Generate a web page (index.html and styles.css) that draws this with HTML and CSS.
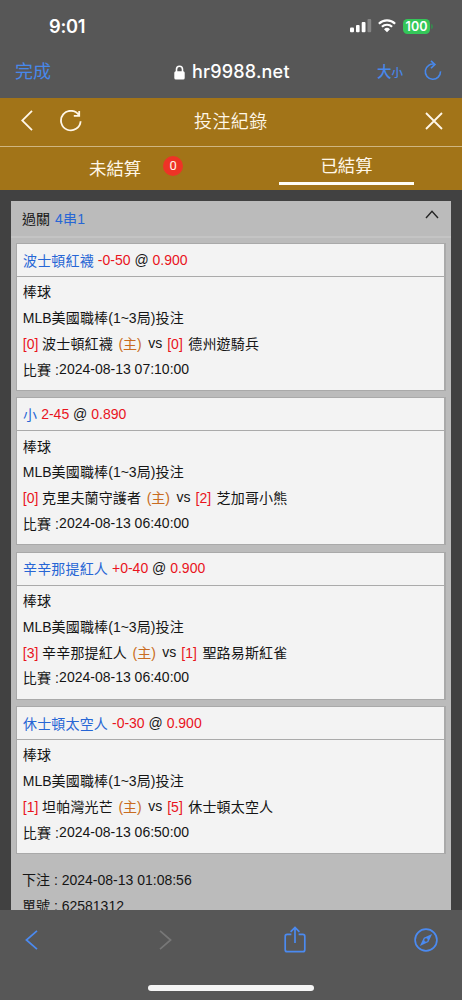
FILE: index.html
```html
<!DOCTYPE html>
<html lang="zh-Hant">
<head>
<meta charset="utf-8">
<title>投注紀錄</title>
<link rel="stylesheet" href="styles.css">
</head>
<body>
<div class="screen">
  <div class="status">
    <span class="clock">9:01</span>
    <svg class="signal" width="22" height="14" viewBox="0 0 22 14"><rect x="0" y="8.5" width="4" height="4.7" rx="1"/><rect x="6" y="6" width="3.6" height="7.2" rx="1"/><rect x="11.7" y="3" width="3.8" height="10.2" rx="1"/><rect x="17.5" y="0" width="3.7" height="13.2" rx="1" class="dim"/></svg>
    <svg class="wifi" width="18" height="14" viewBox="0 0 18 14"><path d="M.9 4.7a11.6 11.6 0 0 1 16.2 0M3.9 7.8a7.4 7.4 0 0 1 10.2 0" /><path class="dot" d="M9 13.3 6 10.2a4.4 4.4 0 0 1 6 0z"/></svg>
    <span class="battery">100</span><span class="battery-tip"></span>
  </div>
  <div class="address">
    <span class="done">完成</span>
    <svg class="lock" width="11" height="15" viewBox="0 0 11 15"><path d="M2.5 7V4.2a3 3 0 0 1 6 0V7" fill="none" stroke="#fff" stroke-width="1.6"/><rect x=".3" y="6.2" width="10.4" height="8.3" rx="1.6" fill="#fff"/></svg>
    <span class="host">hr9988.net</span>
    <span class="size">大<small>小</small></span>
    <svg class="reload" width="18" height="21" viewBox="0 0 18 21"><path d="M10.8 4.3A7.6 7.6 0 1 0 16.5 11.4M7 .9l3.9 3.5L7 8.2"/></svg>
  </div>
  <header class="header">
    <svg class="back" width="12" height="21" viewBox="0 0 12 21"><path d="M11 .8 1.2 10.5 11 20.2"/></svg>
    <svg class="refresh" width="23" height="22" viewBox="0 0 23 22"><path d="M19 5.2A9.8 9.8 0 1 0 20.6 11.2M19.2.9V5.9H13.8"/></svg>
    <h1>投注紀錄</h1>
    <svg class="close" width="18" height="18" viewBox="0 0 18 18"><path d="m1 1 16 16M17 1 1 17"/></svg>
  </header>
  <nav class="tabs">
    <div class="tab pending"><span>未結算</span><b>0</b></div>
    <div class="tab settled"><span>已結算</span></div>
  </nav>
  <main class="content">
    <section class="card">
      <div class="card-head"><span>過關</span><span class="blue combo">4串1</span><svg width="14" height="9" viewBox="0 0 14 9"><path d="m1 8 6-6.6L13 8"/></svg></div>
      <div class="bets">
        <article class="bet">
          <div class="pick"><span class="cj blue">波士頓紅襪</span><span><i>-0-50</i> @ <i>0.900</i></span></div>
          <div class="detail">
            <div class="row cj">棒球</div>
            <div class="row league">MLB<span class="cj">美國職棒</span>(1~3<span class="cj">局</span>)<span class="cj">投注</span></div>
            <div class="row match"><i>[0]</i><span class="cj home">波士頓紅襪</span><span class="host-mark">(主)</span><span class="vs">vs</span><i>[0]</i><span class="cj away">德州遊騎兵</span></div>
            <div class="row time"><span class="label"><span class="cj">比賽</span> :</span><span>2024-08-13 07:10:00</span></div>
          </div>
        </article>
        <article class="bet">
          <div class="pick"><span class="cj blue">小</span><span><i>2-45</i> @ <i>0.890</i></span></div>
          <div class="detail">
            <div class="row cj">棒球</div>
            <div class="row league">MLB<span class="cj">美國職棒</span>(1~3<span class="cj">局</span>)<span class="cj">投注</span></div>
            <div class="row match"><i>[0]</i><span class="cj home">克里夫蘭守護者</span><span class="host-mark">(主)</span><span class="vs">vs</span><i>[2]</i><span class="cj away">芝加哥小熊</span></div>
            <div class="row time"><span class="label"><span class="cj">比賽</span> :</span><span>2024-08-13 06:40:00</span></div>
          </div>
        </article>
        <article class="bet">
          <div class="pick"><span class="cj blue">辛辛那提紅人</span><span><i>+0-40</i> @ <i>0.900</i></span></div>
          <div class="detail">
            <div class="row cj">棒球</div>
            <div class="row league">MLB<span class="cj">美國職棒</span>(1~3<span class="cj">局</span>)<span class="cj">投注</span></div>
            <div class="row match"><i>[3]</i><span class="cj home">辛辛那提紅人</span><span class="host-mark">(主)</span><span class="vs">vs</span><i>[1]</i><span class="cj away">聖路易斯紅雀</span></div>
            <div class="row time"><span class="label"><span class="cj">比賽</span> :</span><span>2024-08-13 06:40:00</span></div>
          </div>
        </article>
        <article class="bet">
          <div class="pick"><span class="cj blue">休士頓太空人</span><span><i>-0-30</i> @ <i>0.900</i></span></div>
          <div class="detail">
            <div class="row cj">棒球</div>
            <div class="row league">MLB<span class="cj">美國職棒</span>(1~3<span class="cj">局</span>)<span class="cj">投注</span></div>
            <div class="row match"><i>[1]</i><span class="cj home">坦帕灣光芒</span><span class="host-mark">(主)</span><span class="vs">vs</span><i>[5]</i><span class="cj away">休士頓太空人</span></div>
            <div class="row time"><span class="label"><span class="cj">比賽</span> :</span><span>2024-08-13 06:50:00</span></div>
          </div>
        </article>
      </div>
      <div class="summary">
        <div>下注 : 2024-08-13 01:08:56</div>
        <div>單號 : 62581312</div>
      </div>
    </section>
  </main>
  <footer class="toolbar">
    <div class="tools">
      <svg class="prev" width="13" height="20" viewBox="0 0 13 20"><path d="M12 .8 1.4 10 12 19.2"/></svg>
      <svg class="next" width="13" height="20" viewBox="0 0 13 20"><path d="M1 .8 11.6 10 1 19.2"/></svg>
      <svg class="share" width="22" height="27" viewBox="0 0 22 27"><path d="M7.4 8.4H3.2a2 2 0 0 0-2 2v13.3a2 2 0 0 0 2 2h15.6a2 2 0 0 0 2-2V10.4a2 2 0 0 0-2-2h-4.2M11 17V1.6M6.6 5.8 11 1.4l4.4 4.4"/></svg>
      <svg class="compass" width="24" height="24" viewBox="0 0 24 24"><circle cx="12" cy="12" r="10.9"/><path fill-rule="evenodd" d="M18.1 5.9 14.4 14 5.9 18.1 9.8 9.8zM12 10.3a1.7 1.7 0 1 0 0 3.4 1.7 1.7 0 0 0 0-3.4z"/></svg>
    </div>
    <div class="home-bar"></div>
  </footer>
</div>
</body>
</html>
```
FILE: styles.css
```css
* { box-sizing: border-box; }
body { margin: 0; background: #414141; font-family: "Liberation Sans", "Noto Sans CJK TC", sans-serif; }
svg { display: block; flex: none; fill: none; }
i { font-style: normal; color: #e9141d; }
.screen { width: 462px; height: 1000px; display: flex; flex-direction: column; overflow: hidden; }
.status, .address { background: #575757; color: #fff; display: flex; align-items: center; flex: none; font-family: Inter, "Noto Sans CJK TC", sans-serif; }
.status { height: 51px; padding: 1px 0 0 49px; }
.clock { width: 301px; font-size: 18.3px; font-weight: 600; letter-spacing: -.3px; }
.signal { fill: #fff; width: 22px; }
.dim { opacity: .28; }
.wifi { margin-left: 6px; stroke: #fff; stroke-width: 2.2; }
.wifi .dot { fill: #fff; stroke: none; }
.battery { margin-left: 7px; width: 27px; height: 15px; border-radius: 4.5px; background: #34c759; font-size: 12.5px; line-height: 15px; font-weight: 600; text-align: center; }
.battery-tip { width: 1.5px; height: 5px; margin-left: 1px; background: #39864e; border-radius: 0 2px 2px 0; }
.address { height: 47px; padding: 0 18px 5px 15px; }
.done { flex: none; width: 159px; color: #4788eb; font-size: 18px; line-height: 24px; }
.host { flex: none; margin: -1px 0 0 7px; width: 185px; font-size: 18px; font-weight: 500; letter-spacing: .2px; }
.size { flex: none; width: 48px; color: #4788eb; font-size: 14.5px; font-weight: 500; line-height: 20px; white-space: nowrap; }
.size small { font-size: 11.5px; }
.reload { stroke: #4788eb; stroke-width: 1.6; margin: -3px 0 0 -1px; }
.header { height: 49px; flex: none; background: #a27418; border-bottom: 1px solid #cfb681; color: #fff7e8; display: flex; align-items: center; padding: 0 19px 3px 21px; }
.header svg { stroke: #fff7e8; stroke-width: 1.8; }
.refresh { margin-left: 27px; }
.header h1 { margin: 3px 0 0 111px; width: 231px; font-size: 18px; line-height: 24px; font-weight: 350; letter-spacing: .4px; }
.tabs { height: 43px; flex: none; display: grid; grid-template-columns: 1fr 1fr; background: #a27418; color: #fff7e8; font-size: 17.4px; line-height: 24px; }
.pending { display: flex; padding: 10px 0 0 89px; }
.pending b { margin: -1px 0 0 22px; width: 20px; height: 20px; border-radius: 50%; background: #ee3326; font: 13px/20px Roboto, sans-serif; text-align: center; }
.settled { padding-top: 7px; text-align: center; }
.settled::after { content: ""; display: block; width: 135px; height: 3px; margin: 4px auto 0 48px; background: #fffdf5; }
.content { flex: 1; min-height: 0; overflow: hidden; padding: 11px 11px 0; background: #414141; }
.card { background: #bbb; font-size: 14px; color: #151515; }
.card-head { height: 37px; display: flex; align-items: center; padding: 0 12px 2px 11px; border-bottom: 2px solid #c4c4c4; font-size: 14px; }
.combo { margin-left: 5px; letter-spacing: .25px; }
.card-head svg { margin: -6px 0 0 auto; stroke: #252525; stroke-width: 1.4; }
.blue { color: #2766d5; }
.bets { padding: 5px 5px 0; display: flex; flex-direction: column; gap: 6.4px; }
.bet { height: 148px; background: #f3f3f3; border: 1px solid #a9a9a9; border-right-width: 2px; }
.pick { height: 33px; border-bottom: 1px solid #aaa; display: flex; align-items: center; gap: 4px; padding: 0 6px 1px; white-space: pre; }
.cj { letter-spacing: .16px; }
.detail { padding: 3.2px 5.8px 0; }
.row { height: 25.8px; line-height: 25.8px; white-space: pre; }
.match, .time { display: flex; }
.home { margin-left: 3.7px; }
.host-mark { margin-left: 5.5px; color: #c96b20; }
.vs { margin: -1px 5px 0 6.5px; }
.away { margin-left: 5.5px; }
.time { margin-top: -1px; }
.label { width: 36.3px; padding-top: 1px; }
.summary { padding: 13px 11px 0; line-height: 26px; height: 80px; }
.toolbar { height: 90px; flex: none; background: #575757; padding-top: 14px; }
.tools { height: 32px; display: flex; align-items: center; padding-left: 25px; }
.tools svg { stroke-width: 1.7; stroke: #4b8af0; }
.tools .next { margin-left: 121px; stroke: #777; }
.tools .share { margin: -2px 0 0 112px; }
.compass { margin-left: 108px; }
.compass path { fill: #4b8af0; stroke: none; }
.home-bar { width: 166px; height: 6px; border-radius: 3px; background: #f5f5f5; margin: 29px auto 0; }
```
